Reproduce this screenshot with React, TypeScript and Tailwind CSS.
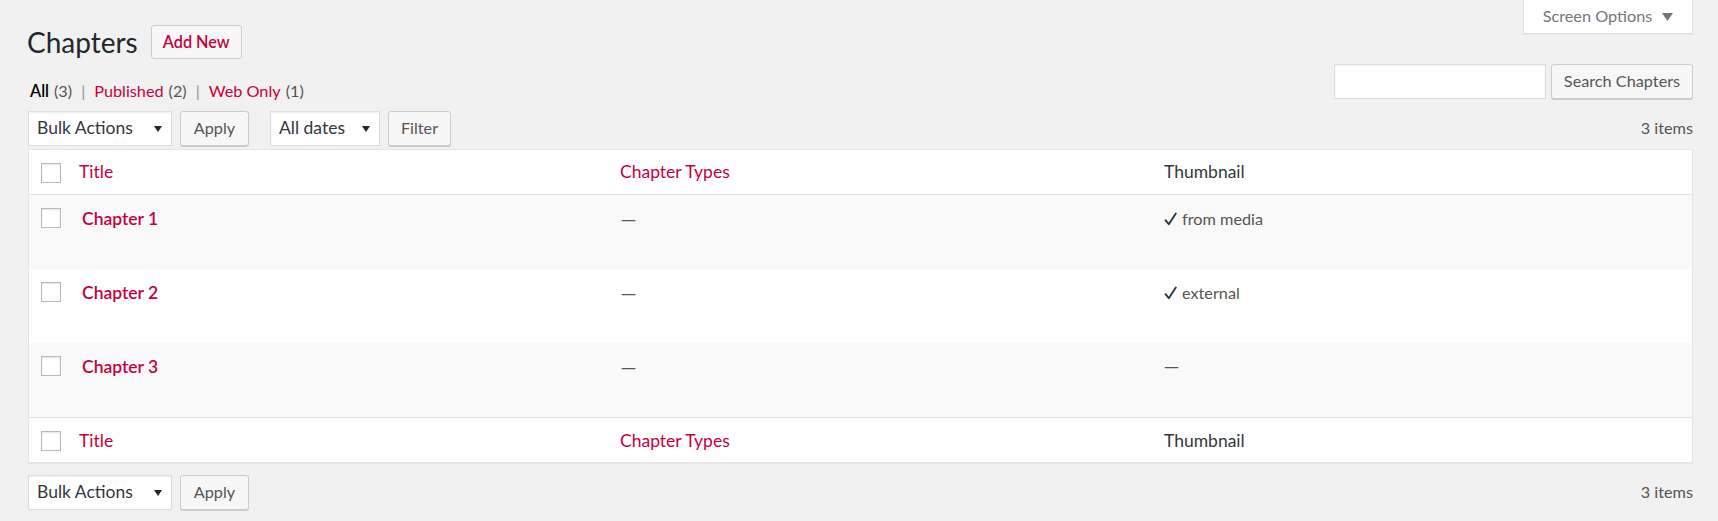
type Row = {
  title: string;
  types: string;
  thumb: string;
  striped: boolean;
};

const rows: Row[] = [
  { title: "Chapter 1", types: "—", thumb: "from media", striped: true },
  { title: "Chapter 2", types: "—", thumb: "external", striped: false },
  { title: "Chapter 3", types: "—", thumb: "", striped: true },
];

const cols = "grid grid-cols-[40px_541px_544px_1fr]";

function Caret({ className, size = "sm" }: { className?: string; size?: "sm" | "lg" }) {
  return size === "lg" ? (
    <svg width="11" height="8" viewBox="0 0 11 8" className={className}>
      <path d="M0 0h11L5.5 8z" fill="currentColor" />
    </svg>
  ) : (
    <svg width="8" height="6" viewBox="0 0 8 6" className={className}>
      <path d="M0 0h8L4 6z" fill="currentColor" />
    </svg>
  );
}

function Dash() {
  return <span className="font-['DejaVu_Sans',sans-serif] text-[15px]">—</span>;
}

function Checkbox() {
  return (
    <span className="block h-[20px] w-[20px] border border-[#b4b9be] bg-white shadow-[inset_0_1px_2px_rgba(0,0,0,0.1)]" />
  );
}

function Button({ label, width }: { label: string; width: string }) {
  return (
    <button
      className={`${width} flex h-[35px] items-center justify-center rounded-[3px] border border-[#cccccc] bg-[#f7f7f7] text-[16.25px] text-[#555555] shadow-[0_1px_0_#cccccc]`}
    >
      {label}
    </button>
  );
}

function SelectBox({ label, width }: { label: string; width: string }) {
  return (
    <div
      className={`${width} flex h-[35px] items-center justify-between border border-[#dddddd] bg-white pl-[8px] pr-[9px] text-[17.5px] text-[#32373c] shadow-[inset_0_1px_2px_rgba(0,0,0,0.07)]`}
    >
      <span>{label}</span>
      <Caret className="mt-[1px] text-[#23282d]" />
    </div>
  );
}

function Tablenav({ withFilter }: { withFilter: boolean }) {
  return (
    <div className="flex h-[35px] items-center justify-between">
      <div className="flex items-center">
        <SelectBox label="Bulk Actions" width="w-[144px]" />
        <div className="ml-[8px]">
          <Button label="Apply" width="w-[69px]" />
        </div>
        {withFilter && (
          <>
            <div className="ml-[21px]">
              <SelectBox label="All dates" width="w-[110px]" />
            </div>
            <div className="ml-[8px]">
              <Button label="Filter" width="w-[63px]" />
            </div>
          </>
        )}
      </div>
      <span className="text-[16.25px] text-[#555555]">3 items</span>
    </div>
  );
}

function HeadRow({ border }: { border: "top" | "bottom" }) {
  return (
    <div
      className={`${cols} h-[45px] items-center bg-white text-[17.5px] ${
        border === "bottom" ? "border-b border-[#e1e1e1] pt-[1px]" : "border-t border-[#e1e1e1] pt-[2px]"
      }`}
    >
      <div className="pl-[12px]">
        <Checkbox />
      </div>
      <span className="pl-[10px] text-[#c5003e]">Title</span>
      <span className="pl-[10px] text-[#c5003e]">Chapter Types</span>
      <span className="pl-[10px] text-[#32373c]">Thumbnail</span>
    </div>
  );
}

export default function App() {
  return (
    <div className="min-h-[521px] w-full bg-[#f1f1f1] pl-[28px] pr-[25px] font-['Lato','Noto_Sans','DejaVu_Sans',sans-serif] text-[#444444]">
      <div className="flex items-start justify-between">
        <div>
          <div className="mt-[25px] flex h-[34px] items-center">
            <h1 className="ml-[-1px] text-[28px] font-normal leading-[34px] text-[#23282d]">Chapters</h1>
            <button className="ml-[13px] flex h-[34px] w-[91px] items-center justify-center rounded-[3px] border border-[#cccccc] bg-[#f7f7f7] text-[16.25px] font-semibold text-[#c5003e]">
              Add New
            </button>
          </div>
          <div className="mt-[22px] flex h-[20px] items-center pl-[2px] text-[16.25px] leading-[20px]">
            <span className="font-semibold text-black">All</span>
            <span className="ml-[5px] text-[#555555]">(3)</span>
            <span className="mx-[9px] text-[#8c8f94]">|</span>
            <span className="text-[#c5003e]">Published</span>
            <span className="ml-[5px] text-[#555555]">(2)</span>
            <span className="mx-[9px] text-[#8c8f94]">|</span>
            <span className="text-[#c5003e]">Web Only</span>
            <span className="ml-[5px] text-[#555555]">(1)</span>
          </div>
        </div>
        <div className="flex flex-col items-end">
          <div className="flex h-[34px] w-[170px] items-center justify-center gap-[10px] border-x border-b border-[#dddddd] bg-white text-[16.25px] text-[#72777c] shadow-[0_1px_1px_rgba(0,0,0,0.04)]">
            <span>Screen Options</span>
            <Caret size="lg" className="text-[#72777c]" />
          </div>
          <div className="mt-[30px] flex items-center gap-[5px]">
            <div className="h-[35px] w-[212px] border border-[#dddddd] bg-white shadow-[inset_0_1px_2px_rgba(0,0,0,0.07)]" />
            <Button label="Search Chapters" width="w-[142px]" />
          </div>
        </div>
      </div>

      <div className="mt-[10px]">
        <Tablenav withFilter />
      </div>

      <div className="mt-[3px] border border-[#e5e5e5] bg-white shadow-[0_1px_1px_rgba(0,0,0,0.04)]">
        <HeadRow border="bottom" />
        {rows.map((r) => (
          <div key={r.title} className={`${cols} h-[74px] items-start ${r.striped ? "bg-[#f9f9f9]" : "bg-white"}`}>
            <div className="pl-[12px] pt-[13px]">
              <Checkbox />
            </div>
            <span className="pl-[13px] pt-[11px] text-[17.5px] font-semibold leading-[26px] text-[#c5003e]">{r.title}</span>
            <span className="pl-[11px] pt-[11px] text-[16.25px] leading-[26px] text-[#555555]">
              <Dash />
            </span>
            <span className="flex items-center pl-[10px] pt-[11px] text-[16.25px] leading-[26px] text-[#555555]">
              {r.thumb ? (
                <>
                  <svg width="13" height="14" viewBox="0 0 13 14" className="mr-[5px] text-[#32373c]">
                    <path d="M1.5 8.2l3.3 4L11.8 1.5" fill="none" stroke="currentColor" strokeWidth="1.9" strokeLinecap="round" strokeLinejoin="round" />
                  </svg>
                  <span>{r.thumb}</span>
                </>
              ) : (
                <Dash />
              )}
            </span>
          </div>
        ))}
        <HeadRow border="top" />
      </div>

      <div className="mt-[12px]">
        <Tablenav withFilter={false} />
      </div>
    </div>
  );
}
